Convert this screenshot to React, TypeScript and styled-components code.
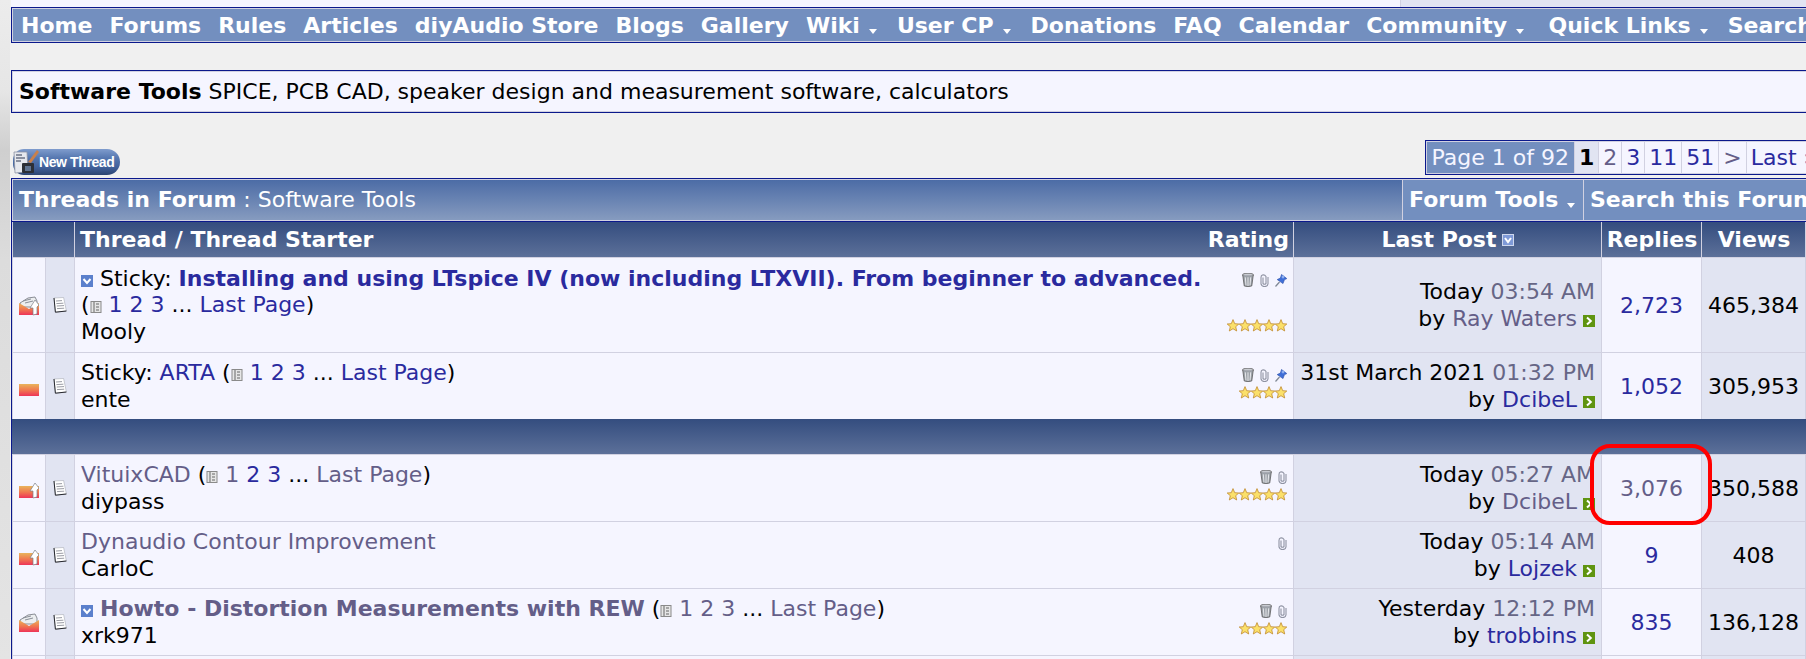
import React from "react";
import styled, { createGlobalStyle } from "styled-components";

const GlobalStyle = createGlobalStyle`
  html, body {
    margin: 0;
    height: 100%;
    overflow: hidden;
    background: #f0f0f0;
    font-family: "DejaVu Sans", Verdana, sans-serif;
    font-size: 22px;
    color: #000;
  }
`;

const LINK = "#2a2a9e";
const VISITED = "#645e88";
const ALT1 = "#f5f5ff";
const ALT2 = "#e1e4f2";
const LINE = "#d1d1e1";
const EDGE = "#0b198c";
const MENU = "#738fbf";

const Page = styled.div`
  display: flex;
  width: 1823px;
  height: 659px;
  overflow: hidden;
`;
const Strip = styled.div`
  flex: 0 0 10px;
  margin-right: 1px;
  background: linear-gradient(180deg, #ececec 0, #e6e6e6 90px, #cfcfcf 150px, #dcdcdc 260px, #e4e4e4 659px);
`;
const Content = styled.div`
  flex: 1;
  min-width: 0;
`;
const TopSliver = styled.div`
  display: flex;
  height: 7px;
`;
const SliverCell = styled.div<{ $alt?: boolean }>`
  background: ${(p) => (p.$alt ? ALT2 : ALT1)};
  ${(p) => (p.$alt ? "flex: 1; border-left: 1px solid " + LINE + ";" : "flex: 0 0 1389px;")}
`;
const NavBar = styled.nav`
  display: flex;
  box-sizing: border-box;
  height: 36px;
  background: ${MENU};
  border: 1px solid ${EDGE};
  box-shadow: inset 0 0 0 1px ${LINE};
  align-items: center;
  overflow: hidden;
  white-space: nowrap;
`;
const NavItem = styled.a`
  color: #fff;
  font-weight: bold;
  padding: 0 8.5px;
  flex: none;
  &:first-child {
    padding-left: 9px;
  }
  &:nth-child(13) {
    padding-right: 13px;
  }
`;
const Caret = styled.span`
  display: inline-block;
  width: 0;
  height: 0;
  margin: 0 3px 0 9px;
  vertical-align: -1px;
  border-left: 4px solid transparent;
  border-right: 4px solid transparent;
  border-top: 5px solid #fff;
`;
const Description = styled.div`
  box-sizing: border-box;
  margin-top: 27px;
  height: 43px;
  line-height: 41px;
  padding-left: 7px;
  background: ${ALT1};
  border: 1px solid ${EDGE};
  box-shadow: inset 0 0 0 1px ${LINE};
  white-space: nowrap;
`;
const Toolbar = styled.div`
  display: flex;
  justify-content: space-between;
  align-items: flex-end;
  height: 35px;
  margin-top: 27px;
  padding-left: 2px;
`;
const NewThread = styled.button`
  display: flex;
  align-items: center;
  width: 107px;
  height: 26px;
  padding: 0;
  border: 0;
  border-radius: 11px 13px 13px 11px;
  background: linear-gradient(180deg, #7f9ccd 0, #5577b0 35%, #41619b 70%, #2c4471 100%);
  color: #fff;
  font-family: "Liberation Sans", Arial, sans-serif;
  font-weight: bold;
  font-size: 14px;
  letter-spacing: -0.4px;
  white-space: nowrap;
`;
const PageNav = styled.div`
  display: flex;
  box-sizing: border-box;
  height: 35px;
  border: 1px solid ${EDGE};
  background: ${LINE};
  gap: 1px;
  padding: 1px;
`;
const PageCell = styled.a<{ $kind?: "label" | "current"; $seen?: boolean }>`
  display: flex;
  align-items: center;
  padding: 0 ${(p) => (p.$kind === "label" ? 5 : 4)}px;
  background: ${(p) => (p.$kind === "label" ? MENU : p.$kind === "current" ? ALT2 : ALT1)};
  color: ${(p) => (p.$kind === "label" ? "#f5f5ff" : p.$kind === "current" ? "#000" : p.$seen ? VISITED : LINK)};
  font-weight: ${(p) => (p.$kind === "current" ? "bold" : "normal")};
`;
const ForumBar = styled.div`
  display: flex;
  box-sizing: border-box;
  margin-top: 3px;
  height: 43px;
  border: 1px solid ${EDGE};
  border-bottom: 0;
  padding: 1px;
  background: ${LINE};
  gap: 1px;
  color: #fff;
  white-space: nowrap;
`;
const ForumTitle = styled.div`
  flex: 1;
  padding-left: 6px;
  line-height: 39px;
  background: linear-gradient(180deg, #4c6ca6 0, #869bbf 100%);
  b {
    font-weight: bold;
  }
`;
const ForumTool = styled.div<{ $w: number }>`
  flex: 0 0 ${(p) => p.$w}px;
  padding-left: 6px;
  box-sizing: border-box;
  line-height: 39px;
  font-weight: bold;
  background: ${MENU};
`;
const Threads = styled.div`
  display: grid;
  grid-template-columns: 32px 28px 1218px 307px 99px 103px 1fr;
  grid-template-rows: 35px 94px 66px 34px 66px 66px 66px 66px;
  gap: 1px;
  padding: 0 1px 1px;
  background: ${LINE};
  border: 1px solid ${EDGE};
  border-bottom: 0;
  box-sizing: border-box;
`;
const HeadCell = styled.div<{ $span?: number; $center?: boolean }>`
  ${(p) => (p.$span ? `grid-column: span ${p.$span};` : "")}
  display: flex;
  align-items: center;
  justify-content: ${(p) => (p.$center ? "center" : "space-between")};
  padding: 0 4px 0 5px;
  gap: 6px;
  color: #fff;
  font-weight: bold;
  background: linear-gradient(180deg, #344d7f 0, #5c7099 100%);
  white-space: nowrap;
`;
const Divider = styled.div`
  grid-column: 1 / -1;
  margin: -1px -1px 0;
  background: linear-gradient(180deg, #344d7f 0, #5c7099 100%);
`;
const Cell = styled.div<{ $alt?: boolean }>`
  background: ${(p) => (p.$alt ? ALT2 : ALT1)};
  display: flex;
  align-items: center;
  justify-content: center;
  position: relative;
  white-space: nowrap;
`;
const TitleCell = styled(Cell)`
  justify-content: space-between;
  align-items: stretch;
  padding: 0 6px;
`;
const TitleText = styled.div`
  align-self: center;
  margin-top: 1px;
  line-height: 26.6px;
`;
const Flags = styled.div`
  display: flex;
  flex-direction: column;
  justify-content: space-between;
  align-items: flex-end;
  padding: 15px 0 20px;
`;
const FlagRow = styled.div`
  display: flex;
  gap: 6px;
  align-items: center;
`;
const Stars = styled.div`
  display: flex;
`;
const LastCell = styled(Cell)`
  flex-direction: column;
  align-items: flex-end;
  padding-right: 6px;
  line-height: 27px;
`;
const Time = styled.span`
  color: #666686;
`;
const Link = styled.a<{ $seen?: boolean; $bold?: boolean }>`
  color: ${(p) => (p.$seen ? VISITED : LINK)};
  font-weight: ${(p) => (p.$bold ? "bold" : "normal")};
`;
const Mark = styled.span`
  position: absolute;
  z-index: 2;
  top: -11px;
  bottom: -4px;
  left: -12px;
  right: -11px;
  border: 4px solid #f00;
  border-radius: 20px;
  pointer-events: none;
`;
const Inline = styled.svg`
  vertical-align: -1px;
`;
const ArrowIcon = styled(Inline)`
  margin-left: 6px;
`;

const Folder = ({ paper, arrow }: { paper?: boolean; arrow?: boolean }) => (
  <svg width="20" height="21" viewBox="0 0 20 21">
    <defs>
      <linearGradient id="env" x1="0" y1="0" x2="0" y2="1">
        <stop offset="0" stopColor="#e9b45c" />
        <stop offset="0.5" stopColor="#f07a50" />
        <stop offset="1" stopColor="#ee3458" />
      </linearGradient>
    </defs>
    {paper && (
      <path d="M1 8 L9 3 L16 2 L18 6 L18 12 L2 12 Z" fill="#eceef0" stroke="#70747c" strokeWidth="0.8" />
    )}
    {paper && <path d="M4 6 L12 4 M6 8 L14 6" stroke="#8a8f98" strokeWidth="1" />}
    {paper ? (
      <path d="M0 8 L10 14 L20 8 L20 20 L0 20 Z" fill="url(#env)" />
    ) : (
      <path d="M0 8 L20 8 L20 20 L0 20 Z" fill="url(#env)" />
    )}
    {arrow && (
      <path d="M14 20 L14 13 L11 13 L16 5 L20 10 L18 12 L18 19 Z" fill="#fff" stroke="#7d7f88" strokeWidth="0.7" />
    )}
  </svg>
);

const Doc = () => (
  <svg width="14" height="16" viewBox="0 0 14 16">
    <path d="M1 1 L10.6 0.5 L13.4 14 L2.4 15.2 Z" fill="#fff" stroke="#a9acb6" strokeWidth="0.6" />
    <path d="M1 1 L2.4 15.2 L13.4 14" fill="none" stroke="#25272d" strokeWidth="1" />
    <path d="M3 4 L9 3.6 M3.4 6.6 L10.4 6.2 M3.8 9 L11 8.6 M4 11.6 L11.2 11.2" stroke="#9a9ca4" strokeWidth="1" />
  </svg>
);

const Multi = () => (
  <Inline width="12" height="12" viewBox="0 0 12 12">
    <rect x="1" y="0.5" width="10" height="11" fill="#e6e6e6" stroke="#8a8a8a" />
    <path d="M4 1 V11 M6 3 H9 M6 6 H9 M6 9 H9" stroke="#666" strokeWidth="1" />
  </Inline>
);

const Check = () => (
  <Inline width="12" height="12" viewBox="0 0 12 12">
    <rect width="12" height="12" fill="#5b80cc" />
    <path d="M2.5 4 L6 8 L9.5 4" fill="none" stroke="#fff" strokeWidth="2" />
  </Inline>
);

const Trash = () => (
  <svg width="12" height="14" viewBox="0 0 11 13">
    <ellipse cx="5.5" cy="1.8" rx="5.2" ry="1.6" fill="#c9ccd2" stroke="#555" strokeWidth="0.7" />
    <path d="M0.6 2 L2 12 Q5.5 13.4 9 12 L10.4 2" fill="#9ca1a8" stroke="#555" strokeWidth="0.7" />
    <path d="M3 4 L3.6 11.5 M5.5 4 V12 M8 4 L7.4 11.5" stroke="#e8e9ec" strokeWidth="0.9" />
  </svg>
);

const Clip = () => (
  <svg width="9" height="13" viewBox="0 0 9 13">
    <path d="M3 3.5 V9.5 Q4.5 11 6 9.5 V2.5 Q4.8 0.5 2.4 1 Q1 1.6 1 3.5 V10 Q1.8 12.6 4.5 12.6 Q7.6 12.6 8 10 V3" fill="none" stroke="#8f93a3" strokeWidth="1.1" />
  </svg>
);

const Pin = () => (
  <svg width="12" height="13" viewBox="0 0 12 13">
    <path d="M0.5 12.5 L4.5 8" stroke="#7f8794" strokeWidth="1.2" />
    <path d="M6.5 0.5 L11.8 4.6 L9.4 5.8 L8 9.6 L2.2 5.6 L5.4 4 Z" fill="#3f6fd8" stroke="#2a4ea6" strokeWidth="0.6" />
    <circle cx="8" cy="3" r="1.4" fill="#8fb0f0" />
  </svg>
);

const Star = () => (
  <svg width="12" height="13" viewBox="0 0 12 13">
    <path d="M6 0.6 L7.7 4.7 L11.8 5 L8.7 7.7 L9.7 12 L6 9.7 L2.3 12 L3.3 7.7 L0.2 5 L4.3 4.7 Z" fill="#fbe06a" stroke="#c08a2e" strokeWidth="0.8" />
  </svg>
);

const LastArrow = () => (
  <ArrowIcon width="12" height="12" viewBox="0 0 12 12">
    <rect width="12" height="12" fill="#5f9410" />
    <path d="M4 2.5 L7.8 6 L4 9.5" fill="none" stroke="#fff" strokeWidth="2" />
  </ArrowIcon>
);

const SortArrow = () => (
  <svg width="12" height="12" viewBox="0 0 12 12">
    <rect x="0.5" y="0.5" width="11" height="11" fill="#7f9ad8" stroke="#cfd8ee" />
    <path d="M3 4 L6 8 L9 4" fill="none" stroke="#fff" strokeWidth="2" />
  </svg>
);

const Pages = ({ seen, last }: { seen: boolean[]; last?: boolean }) => (
  <>
    (<Multi />{" "}
    {seen.map((s, i) => (
      <React.Fragment key={i}>
        <Link $seen={s}>{i + 1}</Link>{" "}
      </React.Fragment>
    ))}
    ... <Link $seen={last}>Last Page</Link>)
  </>
);

const navItems = [
  ["Home"], ["Forums"], ["Rules"], ["Articles"], ["diyAudio Store"], ["Blogs"], ["Gallery"],
  ["Wiki", 1], ["User CP", 1], ["Donations"], ["FAQ"], ["Calendar"], ["Community", 1], ["Quick Links", 1], ["Search"],
] as [string, number?][];

type Row = {
  paper?: boolean;
  arrow?: boolean;
  title: React.ReactNode;
  starter: React.ReactNode;
  flags: ("trash" | "clip" | "pin")[];
  stars: number;
  date: string;
  time: string;
  by: string;
  bySeen?: boolean;
  replies: string;
  repliesSeen?: boolean;
  views: string;
  marked?: boolean;
};

const flagIcons = { trash: <Trash />, clip: <Clip />, pin: <Pin /> };

const ThreadRow = ({ r }: { r: Row }) => (
  <>
    <Cell>
      <Folder paper={r.paper} arrow={r.arrow} />
    </Cell>
    <Cell $alt>
      <Doc />
    </Cell>
    <TitleCell>
      <TitleText>
        {r.title}
        <br />
        {r.starter}
      </TitleText>
      <Flags>
        <FlagRow>
          {r.flags.map((f) => (
            <React.Fragment key={f}>{flagIcons[f]}</React.Fragment>
          ))}
        </FlagRow>
        <Stars>
          {Array.from({ length: r.stars }).map((_, i) => (
            <Star key={i} />
          ))}
        </Stars>
      </Flags>
    </TitleCell>
    <LastCell $alt>
      <div>
        {r.date} <Time>{r.time}</Time>
      </div>
      <div>
        by <Link $seen={r.bySeen}>{r.by}</Link>
        <LastArrow />
      </div>
    </LastCell>
    <Cell>
      <Link $seen={r.repliesSeen}>{r.replies}</Link>
      {r.marked && <Mark />}
    </Cell>
    <Cell $alt>{r.views}</Cell>
    <Cell />
  </>
);

const pinned: Row[] = [
  {
    paper: true,
    arrow: true,
    title: (
      <>
        <Check /> Sticky:{" "}
        <Link $bold>Installing and using LTspice IV (now including LTXVII). From beginner to advanced.</Link>
      </>
    ),
    starter: (
      <>
        <Pages seen={[false, false, false]} />
        <br />
        Mooly
      </>
    ),
    flags: ["trash", "clip", "pin"],
    stars: 5,
    date: "Today",
    time: "03:54 AM",
    by: "Ray Waters",
    bySeen: true,
    replies: "2,723",
    views: "465,384",
  },
  {
    title: (
      <>
        Sticky: <Link>ARTA</Link> <Pages seen={[false, false, false]} />
      </>
    ),
    starter: "ente",
    flags: ["trash", "clip", "pin"],
    stars: 4,
    date: "31st March 2021",
    time: "01:32 PM",
    by: "DcibeL",
    replies: "1,052",
    views: "305,953",
  },
];

const normal: Row[] = [
  {
    arrow: true,
    title: (
      <>
        <Link $seen>VituixCAD</Link> <Pages seen={[true, false, false]} last />
      </>
    ),
    starter: "diypass",
    flags: ["trash", "clip"],
    stars: 5,
    date: "Today",
    time: "05:27 AM",
    by: "DcibeL",
    bySeen: true,
    replies: "3,076",
    repliesSeen: true,
    views: "350,588",
    marked: true,
  },
  {
    arrow: true,
    title: <Link $seen>Dynaudio Contour Improvement</Link>,
    starter: "CarloC",
    flags: ["clip"],
    stars: 0,
    date: "Today",
    time: "05:14 AM",
    by: "Lojzek",
    replies: "9",
    views: "408",
  },
  {
    paper: true,
    title: (
      <>
        <Check /> <Link $seen $bold>Howto - Distortion Measurements with REW</Link>{" "}
        <Pages seen={[true, true, true]} last />
      </>
    ),
    starter: "xrk971",
    flags: ["trash", "clip"],
    stars: 4,
    date: "Yesterday",
    time: "12:12 PM",
    by: "trobbins",
    replies: "835",
    views: "136,128",
  },
];

export default function App() {
  return (
    <Page>
      <GlobalStyle />
      <Strip />
      <Content>
        <TopSliver>
          <SliverCell />
          <SliverCell $alt />
        </TopSliver>
        <NavBar>
          {navItems.map(([label, menu]) => (
            <NavItem key={label}>
              {label}
              {menu && <Caret />}
            </NavItem>
          ))}
        </NavBar>
        <Description>
          <b>Software Tools</b> SPICE, PCB CAD, speaker design and measurement software, calculators
        </Description>
        <Toolbar>
          <NewThread>
            <svg width="26" height="26" viewBox="0 0 26 26">
              <path d="M1 3 L14 3 L15 23 L2 24 Z" fill="#e6e8ee" stroke="#8d93a3" strokeWidth="0.8" />
              <path d="M3 6 H9 M3 9 H12 M3 12 H8" stroke="#6c7386" strokeWidth="1.4" />
              <path d="M15 13 L24 1 L26 3 L18 14 Z" fill="#c9804a" />
              <rect x="9" y="14" width="12" height="10" rx="1" fill="#2c2f36" />
              <rect x="12" y="17" width="6" height="5" fill="#5f7390" />
            </svg>
            New Thread
          </NewThread>
          <PageNav>
            <PageCell $kind="label">Page 1 of 92</PageCell>
            <PageCell $kind="current">1</PageCell>
            <PageCell $seen>2</PageCell>
            <PageCell>3</PageCell>
            <PageCell>11</PageCell>
            <PageCell>51</PageCell>
            <PageCell $seen>&gt;</PageCell>
            <PageCell>Last »</PageCell>
          </PageNav>
        </Toolbar>
        <ForumBar>
          <ForumTitle>
            <b>Threads in Forum</b> : Software Tools
          </ForumTitle>
          <ForumTool $w={180}>
            Forum Tools
            <Caret />
          </ForumTool>
          <ForumTool $w={237}>Search this Forum</ForumTool>
        </ForumBar>
        <Threads>
          <HeadCell $span={2} />
          <HeadCell>
            <span>Thread / Thread Starter</span>
            <span>Rating</span>
          </HeadCell>
          <HeadCell $center>
            Last Post <SortArrow />
          </HeadCell>
          <HeadCell $center>Replies</HeadCell>
          <HeadCell $center>Views</HeadCell>
          <HeadCell />
          {pinned.map((r, i) => (
            <ThreadRow key={i} r={r} />
          ))}
          <Divider />
          {normal.map((r, i) => (
            <ThreadRow key={i} r={r} />
          ))}
          <Cell />
          <Cell $alt />
          <Cell />
          <Cell $alt />
          <Cell />
          <Cell $alt />
          <Cell />
        </Threads>
      </Content>
    </Page>
  );
}
